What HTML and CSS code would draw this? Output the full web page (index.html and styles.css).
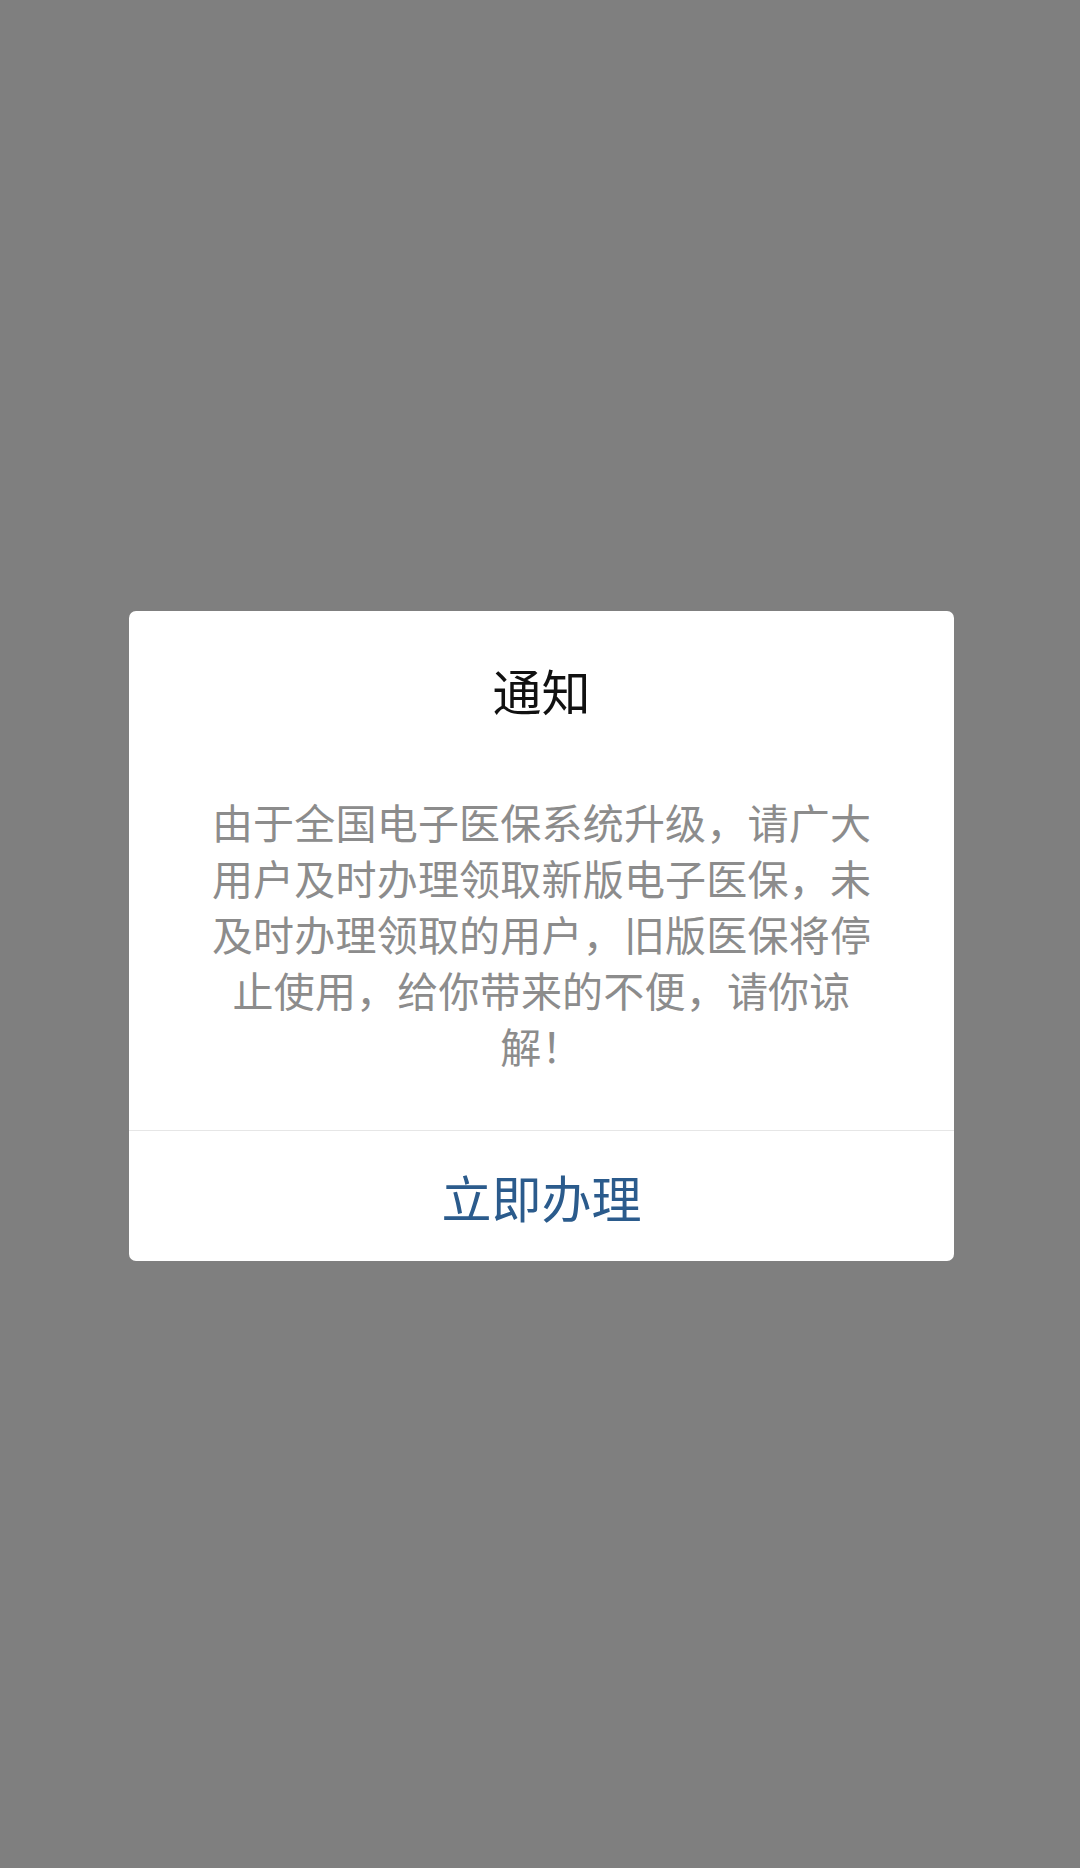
FILE: index.html
```html
<!DOCTYPE html>
<html lang="zh-CN">
<head>
<meta charset="utf-8">
<title>通知</title>
<link rel="stylesheet" href="styles.css">
</head>
<body>
<div class="overlay">
  <div class="dialog">
    <div class="dialog-title">通知</div>
    <div class="dialog-body">由于全国电子医保系统升级，请广大用户及时办理领取新版电子医保，未及时办理领取的用户，旧版医保将停止使用，给你带来的不便，请你谅解！</div>
    <div class="dialog-footer">
      <div class="dialog-button">立即办理</div>
    </div>
  </div>
</div>
</body>
</html>
```
FILE: styles.css
```css
html, body {
  margin: 0;
  padding: 0;
}
body {
  background: #7f7f7f;
  font-family: "Noto Sans CJK SC", "Noto Sans", sans-serif;
}
.overlay {
  min-height: 1868px;
  display: flex;
  align-items: center;
  justify-content: center;
}
.dialog {
  width: 825px;
  margin-left: 3px;
  margin-top: 4px;
  background: #ffffff;
  border-radius: 7px;
  overflow: hidden;
}
.dialog-title {
  padding-top: 48px;
  font-size: 49px;
  line-height: 62px;
  color: #111111;
  text-align: center;
}
.dialog-body {
  width: 672px;
  margin: 72px auto 0;
  padding-bottom: 57px;
  font-size: 41px;
  letter-spacing: 0.2px;
  line-height: 56px;
  color: #8c8c8c;
  text-align: center;
}
.dialog-footer {
  border-top: 1px solid #e6e6e6;
}
.dialog-button {
  height: 130px;
  display: flex;
  align-items: center;
  justify-content: center;
  font-size: 50px;
  color: #2b5b8c;
}
```
